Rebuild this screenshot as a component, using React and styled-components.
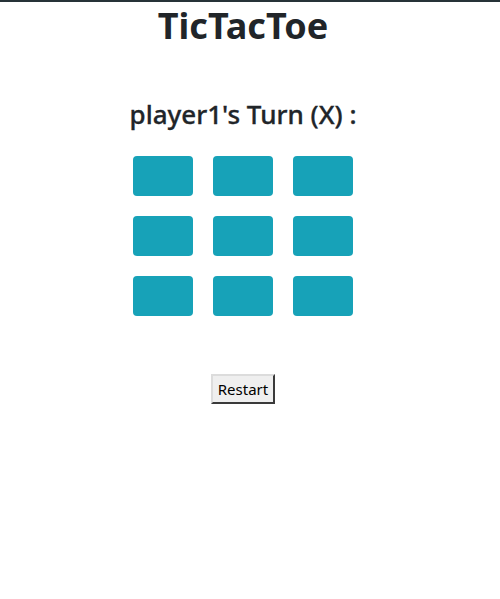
import React, { useState } from "react";
import styled, { createGlobalStyle } from "styled-components";

const Global = createGlobalStyle`
  html, body { margin: 0; padding: 0; background: #fff; }
  body {
    font-family: "Noto Sans", "Open Sans", sans-serif;
    color: #212529;
  }
`;

const Page = styled.div`
  border-top: 2px solid #263238;
  padding-right: 14px;
  display: flex;
  flex-direction: column;
  align-items: center;
`;

const Title = styled.h1`
  margin: 0;
  font-size: 36px;
  font-weight: 700;
  line-height: 48px;
`;

const Turn = styled.h3`
  margin: 47px 0 0;
  font-size: 26px;
  font-weight: 500;
  line-height: 34px;
  -webkit-text-stroke: 0.3px #212529;
`;

const Board = styled.div`
  margin-top: 25px;
  display: grid;
  grid-template-columns: repeat(3, 60px);
  grid-auto-rows: 40px;
  gap: 20px;
`;

const Cell = styled.button`
  border: none;
  border-radius: 4px;
  background: #17a2b8;
  padding: 0;
  cursor: pointer;
  font: inherit;
  color: #fff;
`;

const Restart = styled.button`
  margin-top: 58px;
  width: 64px;
  height: 30px;
  padding: 0;
  background: #efefef;
  border: 2px solid;
  border-color: #dcdcdc #3a3a3a #3a3a3a #dcdcdc;
  font-family: "Noto Sans", "Open Sans", sans-serif;
  font-size: 15px;
  color: #000;
`;

export default function App() {
  const [cells] = useState(Array(9).fill(""));
  return (
    <>
      <Global />
      <Page>
        <Title>TicTacToe</Title>
        <Turn>player1's Turn (X) :</Turn>
        <Board>
          {cells.map((c, i) => (
            <Cell key={i}>{c}</Cell>
          ))}
        </Board>
        <Restart>Restart</Restart>
      </Page>
    </>
  );
}
